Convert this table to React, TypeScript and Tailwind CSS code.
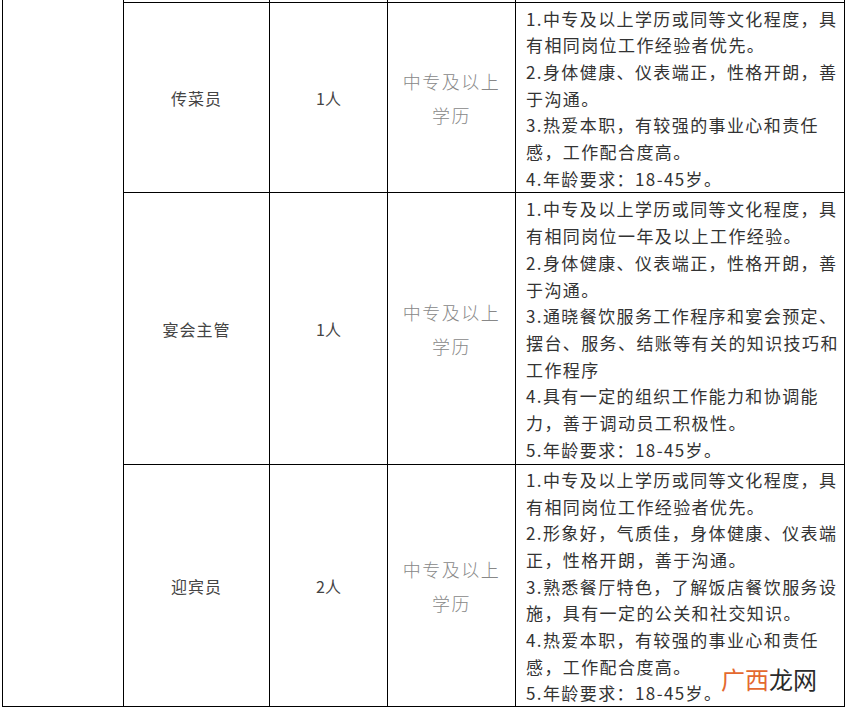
import React from "react";

type JobRow = {
  name: string;
  count: string;
  height: string;
  lines: string[];
};

const rows: JobRow[] = [
  {
    name: "传菜员",
    count: "1人",
    height: "h-[190px]",
    lines: [
      "1.中专及以上学历或同等文化程度，具",
      "有相同岗位工作经验者优先。",
      "2.身体健康、仪表端正，性格开朗，善",
      "于沟通。",
      "3.热爱本职，有较强的事业心和责任",
      "感，工作配合度高。",
      "4.年龄要求：18-45岁。",
    ],
  },
  {
    name: "宴会主管",
    count: "1人",
    height: "h-[272px]",
    lines: [
      "1.中专及以上学历或同等文化程度，具",
      "有相同岗位一年及以上工作经验。",
      "2.身体健康、仪表端正，性格开朗，善",
      "于沟通。",
      "3.通晓餐饮服务工作程序和宴会预定、",
      "摆台、服务、结账等有关的知识技巧和",
      "工作程序",
      "4.具有一定的组织工作能力和协调能",
      "力，善于调动员工积极性。",
      "5.年龄要求：18-45岁。",
    ],
  },
  {
    name: "迎宾员",
    count: "2人",
    height: "h-[243px] border-b",
    lines: [
      "1.中专及以上学历或同等文化程度，具",
      "有相同岗位工作经验者优先。",
      "2.形象好，气质佳，身体健康、仪表端",
      "正，性格开朗，善于沟通。",
      "3.熟悉餐厅特色，了解饭店餐饮服务设",
      "施，具有一定的公关和社交知识。",
      "4.热爱本职，有较强的事业心和责任",
      "感，工作配合度高。",
      "5.年龄要求：18-45岁。",
    ],
  },
];

const font = "font-['Noto_Sans_CJK_SC',sans-serif]";

const App: React.FC = () => {
  return (
    <div className={`relative h-[708px] w-[849px] overflow-hidden bg-white pl-[2px] text-[#333] ${font}`}>
      <div className="flex">
        {/* merged first column, continues from rows above */}
        <div className="h-[707px] w-[121px] border-b border-l border-black" />
        <div className="flex flex-col">
          <div className="flex h-[2px]">
            <div className="w-[146px] border-l border-black" />
            <div className="w-[118px] border-l border-black" />
            <div className="w-[128px] border-l border-black" />
            <div className="w-[330px] border-x border-black" />
          </div>
          {rows.map((row, index) => (
            <div key={index} className={`flex border-t border-black ${row.height}`}>
              <div className="flex w-[146px] items-center justify-center border-l border-black text-[16px] tracking-[1px] text-[#444]">
                {row.name}
              </div>
              <div className="flex w-[118px] items-center justify-center border-l border-black text-[16px] text-[#444]">
                {row.count}
              </div>
              <div className="flex w-[128px] flex-col items-center justify-center border-l border-black text-[18px] font-light leading-[34px] tracking-[1.5px] text-[#888]">
                <div>中专及以上</div>
                <div>学历</div>
              </div>
              <div className="flex w-[330px] flex-col justify-center border-x border-black px-[10px] pt-[3px] text-[17px] leading-[26.7px] tracking-[1.4px]">
                {row.lines.map((line, i) => (
                  <div key={i} className="whitespace-nowrap">
                    {line}
                  </div>
                ))}
              </div>
            </div>
          ))}
        </div>
      </div>
      <div className="absolute left-[721px] top-[664px] text-[24px] leading-[30px]">
        <span className="text-[#e4692f]">广西</span>
        <span className="text-[#2b2b2b]">龙网</span>
      </div>
    </div>
  );
};

export default App;
